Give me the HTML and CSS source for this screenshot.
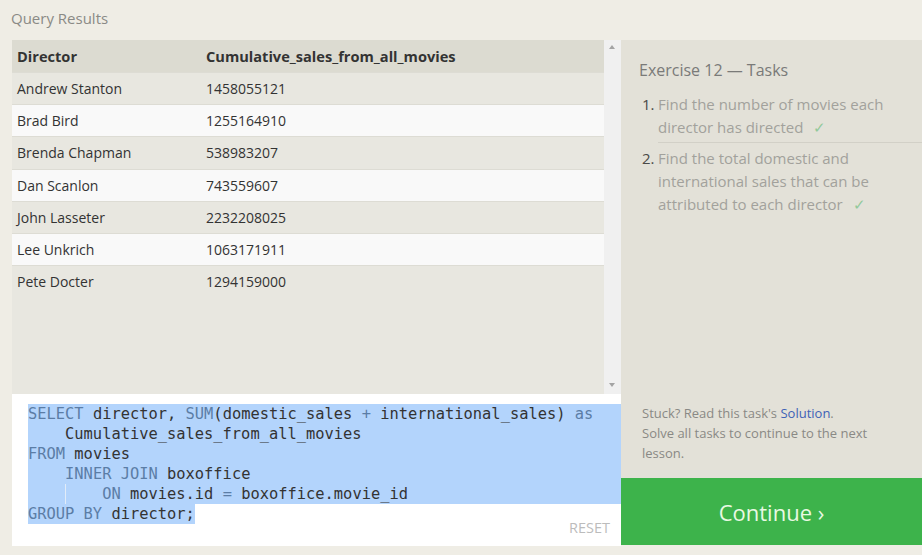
FILE: index.html
```html
<!DOCTYPE html>
<html>
<head>
<meta charset="utf-8">
<link rel="stylesheet" href="styles.css">
</head>
<body>
<div class="page">
  <div class="title">Query Results</div>
  <div class="main">
    <div class="left">
      <div class="results">
        <div class="table-wrap">
          <table class="grid">
            <thead>
              <tr><th class="c1">Director</th><th>Cumulative_sales_from_all_movies</th></tr>
            </thead>
            <tbody>
              <tr><td>Andrew Stanton</td><td>1458055121</td></tr>
              <tr><td>Brad Bird</td><td>1255164910</td></tr>
              <tr><td>Brenda Chapman</td><td>538983207</td></tr>
              <tr><td>Dan Scanlon</td><td>743559607</td></tr>
              <tr><td>John Lasseter</td><td>2232208025</td></tr>
              <tr><td>Lee Unkrich</td><td>1063171911</td></tr>
              <tr><td>Pete Docter</td><td>1294159000</td></tr>
            </tbody>
          </table>
        </div>
        <div class="scrollbar">
          <span class="arrow up"></span>
          <span class="arrow down"></span>
        </div>
      </div>
      <div class="editor">
        <div class="code">
          <div class="line full"><span class="kw">SELECT</span> director, <span class="kw">SUM</span>(domestic_sales <span class="kw">+</span> international_sales) <span class="kw">as</span></div>
          <div class="line full">    Cumulative_sales_from_all_movies</div>
          <div class="line full"><span class="kw">FROM</span> movies</div>
          <div class="line full">    <span class="kw">INNER JOIN</span> boxoffice</div>
          <div class="line full">    <span class="guide"></span>    <span class="kw">ON</span> movies.id <span class="kw">=</span> boxoffice.movie_id</div>
          <div class="line"><span class="sel"><span class="kw">GROUP BY</span> director;</span></div>
        </div>
        <div class="reset">RESET</div>
      </div>
    </div>
    <div class="right">
      <div class="tasks">
        <h2 class="tasks-title">Exercise 12 — Tasks</h2>
        <ol class="task-list">
          <li class="task first"><span class="num">1.</span><span class="txt">Find the number of movies each director has directed <span class="check">✓</span></span></li>
          <li class="task"><span class="num">2.</span><span class="txt">Find the total domestic and international sales that can be attributed to each director <span class="check">✓</span></span></li>
        </ol>
        <div class="stuck">Stuck? Read this task's <a class="link">Solution</a>.<br>Solve all tasks to continue to the next lesson.</div>
      </div>
      <div class="continue">Continue ›</div>
    </div>
  </div>
</div>
</body>
</html>
```
FILE: styles.css
```css
html, body {
  margin: 0;
  padding: 0;
}
body {
  background: #efede5;
  font-family: "Open Sans", "Noto Sans", sans-serif;
  width: 922px;
  height: 555px;
  overflow: hidden;
}
.page {
  display: flex;
  flex-direction: column;
}
.title {
  height: 40px;
  box-sizing: border-box;
  padding: 7px 0 0 11px;
  font-size: 15px;
  color: #8a8a86;
  line-height: 22px;
}
.main {
  display: flex;
  height: 506px;
}
.left {
  margin-left: 12px;
  width: 609px;
  display: flex;
  flex-direction: column;
}
.results {
  height: 354px;
  display: flex;
  background: #e8e7e0;
}
.table-wrap {
  width: 592px;
}
.grid {
  width: 100%;
  border-collapse: collapse;
  font-size: 14px;
  color: #333;
}
.grid th {
  text-align: left;
  background: #dcdbd1;
  height: 32px;
  padding: 0 0 0 5px;
  font-weight: bold;
  font-size: 14.6px;
  color: #333;
}
.grid th.c1 {
  width: 184px;
}
.grid td {
  height: 32.2px;
  padding: 0 0 0 5px;
  border-top: 1px solid #dddcd4;
  box-sizing: border-box;
}
.grid tbody tr:nth-child(odd) td {
  background: #e8e7e0;
}
.grid tbody tr:nth-child(even) td {
  background: #f9f9f9;
}
.scrollbar {
  width: 17px;
  background: #f0f0f0;
  position: relative;
}
.arrow {
  position: absolute;
  left: 5px;
  width: 0;
  height: 0;
  border-left: 3.5px solid transparent;
  border-right: 3.5px solid transparent;
}
.arrow.up {
  top: 5px;
  border-bottom: 4px solid #a3a3a3;
}
.arrow.down {
  bottom: 7px;
  border-top: 4px solid #a3a3a3;
}
.editor {
  height: 152px;
  background: #ffffff;
  display: flex;
  flex-direction: column;
}
.code {
  padding: 10px 0 0 16px;
  font-family: "DejaVu Sans Mono", "Liberation Mono", monospace;
  font-size: 15.4px;
  line-height: 20px;
  color: #333;
}
.line {
  height: 20px;
  white-space: pre;
}
.line.full {
  background: #b3d4fc;
}
.sel {
  background: #b3d4fc;
  display: inline-block;
  height: 20px;
}
.kw {
  color: #5b7da6;
}
.guide {
  border-left: 1px solid #e2ecf8;
  display: inline-block;
  width: 0;
  height: 20px;
  vertical-align: top;
  margin-right: -1px;
}
.reset {
  align-self: flex-end;
  margin-top: -4px;
  padding-right: 11px;
  font-size: 14.5px;
  line-height: 16px;
  color: #bcbcbc;
}
.right {
  width: 301px;
  display: flex;
  flex-direction: column;
}
.tasks {
  flex: 1;
  background: #e3e1d8;
  padding: 19px 0 0 18px;
  display: flex;
  flex-direction: column;
}
.tasks-title {
  margin: 0;
  font-size: 16px;
  font-weight: normal;
  color: #7a7a78;
  line-height: 22px;
}
.task-list {
  list-style: none;
  margin: 12px 0 0 0;
  padding: 0;
}
.task {
  display: flex;
  font-size: 15px;
  line-height: 23px;
  color: #a2a19c;
}
.task.first {
  margin-bottom: 4px;
}
.task.first .txt {
  border-bottom: 1px solid #d2d0c7;
  padding-bottom: 3px;
}
.num {
  width: 16px;
  margin-left: 3px;
  color: #4a4a48;
  flex: none;
}
.txt {
  flex: 1;
  padding-right: 30px;
}
.check {
  color: #92c99b;
  margin-left: 6px;
}
.stuck {
  margin-top: auto;
  padding: 0 20px 15px 3px;
  font-size: 13px;
  line-height: 20px;
  color: #8a8985;
}
.link {
  color: #3e61b6;
}
.continue {
  height: 67px;
  background: #3db34b;
  color: #e9f9e3;
  font-size: 22px;
  display: flex;
  align-items: center;
  justify-content: center;
  margin-bottom: 1px;
}
```
